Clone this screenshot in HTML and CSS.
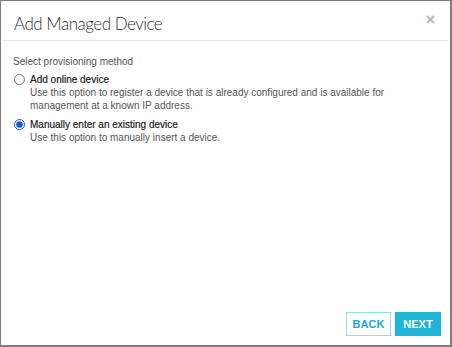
FILE: index.html
```html
<!DOCTYPE html>
<html lang="en">
<head>
    <meta charset="UTF-8">
    <title>Add Managed Device</title>
    <link rel="stylesheet" href="styles.css">
</head>
<body>
    <div class="dialog">
        <div class="dialog-header">
            <h2>Add Managed Device</h2>
            <span class="close">&times;</span>
        </div>
        <div class="dialog-body">
            <p class="prompt">Select provisioning method</p>
            <label class="option">
                <input type="radio" name="method" value="online">
                <span class="option-text">
                    <strong>Add online device</strong>
                    <span>Use this option to register a device that is already configured and is available for management at a known IP address.</span>
                </span>
            </label>
            <label class="option">
                <input type="radio" name="method" value="manual" checked>
                <span class="option-text">
                    <strong>Manually enter an existing device</strong>
                    <span>Use this option to manually insert a device.</span>
                </span>
            </label>
        </div>
        <div class="dialog-footer">
            <button class="btn btn-back">BACK</button>
            <button class="btn btn-next">NEXT</button>
        </div>
    </div>
</body>
</html>
```

FILE: styles.css
```css
html, body {
    margin: 0;
    height: 100%;
}
body {
    font-family: "Liberation Sans", Arial, sans-serif;
    background-color: #fff;
}
.dialog {
    height: 347px;
    box-sizing: border-box;
    border: 1px solid #7c7c7c;
    border-bottom-width: 2px;
    border-right-width: 2px;
    display: flex;
    flex-direction: column;
}
.dialog-header {
    display: flex;
    justify-content: space-between;
    align-items: flex-start;
    margin: 0 2px;
    padding: 12px 13px 0 11px;
    height: 27px;
    border-bottom: 1px solid #e5e5e5;
}
.dialog-header h2 {
    margin: 0;
    font-family: Lato, "Open Sans", sans-serif;
    font-weight: 300;
    font-size: 17px;
    line-height: 22px;
    color: #333;
    letter-spacing: -0.5px;
}
.close {
    font-size: 16px;
    font-weight: bold;
    color: #b5b5b5;
    line-height: 12px;
    margin-top: 1px;
}
.dialog-body {
    flex: 1;
    padding: 14px 12px 0 12px;
    font-size: 10px;
    color: #444;
}
.prompt {
    margin: 0 0 5px;
    line-height: 13px;
    color: #555;
}
.option {
    display: flex;
    align-items: flex-start;
    gap: 5px;
    margin-bottom: 6px;
    line-height: 13px;
}
.option input {
    margin: 1px 0 0 1px;
    width: 11px;
    height: 11px;
    accent-color: #1a5fd0;
}
.option-text {
    display: flex;
    flex-direction: column;
}
.option-text strong {
    font-weight: normal;
    color: #222;
    -webkit-text-stroke: 0.2px #222;
}
.option-text span {
    color: #555;
}
.dialog-footer {
    display: flex;
    justify-content: flex-end;
    gap: 4px;
    padding: 0 9px 9px 0;
}
.btn {
    font-family: "Liberation Sans", Arial, sans-serif;
    font-size: 11px;
    font-weight: bold;
    height: 24px;
    padding: 0;
    border-radius: 0;
    cursor: pointer;
}
.btn-back {
    background-color: #fff;
    border: 1px solid #8fdcec;
    color: #1ba9cb;
    width: 45px;
}
.btn-next {
    background-color: #1fb5d6;
    border: 1px solid #1fb5d6;
    color: #fff;
    width: 46px;
}
```
